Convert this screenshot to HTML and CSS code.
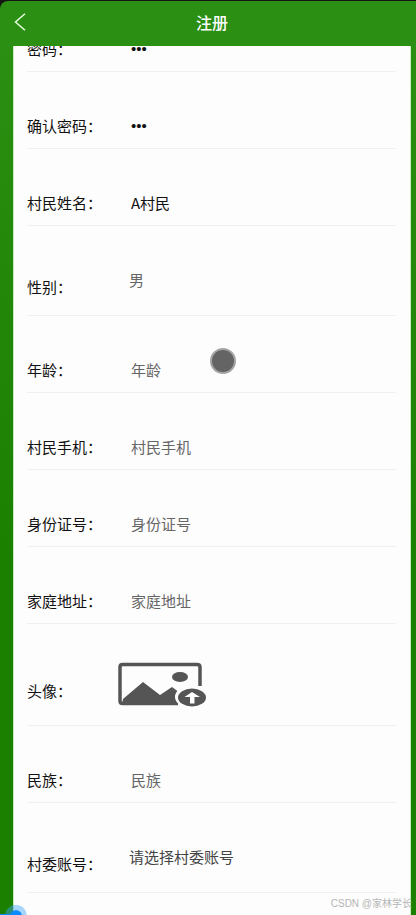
FILE: index.html
```html
<!DOCTYPE html>
<html lang="zh-CN">
<head>
    <meta charset="UTF-8">
    <meta name="viewport" content="width=device-width, initial-scale=1.0">
    <title>注册</title>
    <link rel="stylesheet" href="styles.css">
</head>
<body>
    <div class="app">
        <header class="header">
            <button class="back" type="button" aria-label="返回">
                <svg width="12" height="18" viewBox="0 0 12 18" fill="none" stroke="currentColor" stroke-width="1.5">
                    <path d="M11 .8L1.5 9l9.500 8.200"/>
                </svg>
            </button>
            <h1>注册</h1>
        </header>

        <main class="content">
            <form class="form">
                <div class="row">
                    <label for="password">密码：</label>
                    <input id="password" type="password" value="123">
                </div>
                <div class="row">
                    <label for="password2">确认密码：</label>
                    <input id="password2" type="password" value="123">
                </div>
                <div class="row">
                    <label for="name">村民姓名：</label>
                    <input id="name" type="text" value="A村民">
                </div>
                <div class="row row-select">
                    <label for="sex">性别：</label>
                    <select id="sex">
                        <option>男</option>
                        <option>女</option>
                    </select>
                </div>
                <div class="row">
                    <label for="age">年龄：</label>
                    <input id="age" type="text" placeholder="年龄">
                </div>
                <div class="row">
                    <label for="phone">村民手机：</label>
                    <input id="phone" type="tel" placeholder="村民手机">
                </div>
                <div class="row">
                    <label for="idcard">身份证号：</label>
                    <input id="idcard" type="text" placeholder="身份证号">
                </div>
                <div class="row">
                    <label for="address">家庭地址：</label>
                    <input id="address" type="text" placeholder="家庭地址">
                </div>
                <div class="row row-upload">
                    <label for="avatar">头像：</label>
                    <button class="upload" id="avatar" type="button">
                        <svg width="90" height="46" viewBox="0 0 90 46">
                            <path d="M82 24V5q0-2.500-3-2.500H4.500Q2 2.500 2 5v34q0 2.500 2.500 2.500H60" fill="none" stroke="#555" stroke-width="3.500"/>
                            <path d="M5 37L25 20l17 13 12-8 8 6v11H4z" fill="#555"/>
                            <ellipse cx="62" cy="15" rx="8" ry="5" fill="#555"/>
                            <ellipse cx="74" cy="35" rx="17" ry="11.500" fill="#fdfdfd"/>
                            <ellipse cx="74" cy="35.500" rx="14" ry="9" fill="#555"/>
                            <path d="M74 30l-7.500 5H72v6.500h4.500V35H82z" fill="#fff"/>
                        </svg>
                    </button>
                </div>
                <div class="row">
                    <label for="nation">民族：</label>
                    <input id="nation" type="text" placeholder="民族">
                </div>
                <div class="row row-select">
                    <label for="account">村委账号：</label>
                    <select id="account" class="dark">
                        <option>请选择村委账号</option>
                    </select>
                </div>
            </form>
        </main>

        <div class="touch"></div>
        <div class="progress"></div>
        <div class="watermark">CSDN @家林学长</div>
    </div>
</body>
</html>
```
FILE: styles.css
```css
* {
    box-sizing: border-box;
}
body {
    margin: 0;
    background: #151515;
    font-family: "Noto Sans CJK SC", sans-serif;
    font-size: 15px;
    color: #111;
}
.app {
    position: relative;
    height: 100vh;
    padding-top: 1px;
    display: flex;
    flex-direction: column;
    overflow: hidden;
}
.header {
    display: grid;
    grid-template-columns: 40px 1fr 32px;
    align-items: center;
    flex: none;
    height: 45px;
    padding-bottom: 3px;
    background: #2a8f12;
    border-top-left-radius: 8px;
    color: #fff;
}
.header h1 {
    margin: 0;
    font-size: 16px;
    font-weight: 500;
    text-align: center;
}
.back {
    display: flex;
    padding: 0 0 0 14px;
    border: none;
    background: none;
    color: #e8ffe0;
}
.content {
    flex: 1;
    min-height: 0;
    padding: 0 5px 0 13px;
    background: linear-gradient(#2a8f12, #1b7f00 60%);
    overflow: hidden;
}
/* form is scrolled down a little under the header */
.form {
    margin-top: -52px;
    padding: 0 14px 32px 13px;
    background: #fdfdfd;
    border: 1px solid #c4eab8;
}
.row {
    display: flex;
    align-items: center;
    height: 77px;
    padding: 35px 0 4px;
    border-bottom: 1px solid #f0f0f0;
}
.row-select {
    height: 90px;
}
.row-upload {
    height: 102px;
}
.row label {
    flex: none;
    width: 104px;
}
.row input,
.row select {
    flex: 1;
    min-width: 0;
    height: 40px;
    padding: 0;
    border: none;
    outline: none;
    background: none;
    font: inherit;
    color: #111;
}
.row input::placeholder {
    color: #666;
}
.row input[type="password"] {
    font-family: "Liberation Sans", sans-serif;
}
.row select {
    appearance: none;
    align-self: flex-start;
    height: 36px;
    margin-left: -2px;
    color: #666;
}
.row select.dark {
    color: #444;
}
.upload {
    display: flex;
    align-self: flex-start;
    margin-left: -13px;
    padding: 3px 0;
    border: none;
    background: none;
}
.touch {
    position: absolute;
    left: 210px;
    top: 348px;
    width: 26px;
    height: 26px;
    border: 2px solid #a5a5a5;
    border-radius: 50%;
    background: #646464;
}
.progress {
    position: absolute;
    left: 5px;
    bottom: -12px;
    width: 22px;
    height: 22px;
    border: 5px solid rgba(60, 165, 255, 0.45);
    border-radius: 50%;
    background: #0a8cff;
    background-clip: padding-box;
}
.progress::before {
    content: "";
    position: absolute;
    left: -10px;
    top: 4px;
    width: 16px;
    height: 2px;
    background: #0a8cff;
}
.watermark {
    position: absolute;
    right: 4px;
    bottom: 3px;
    font-family: "Liberation Sans", "Noto Sans CJK SC", sans-serif;
    font-size: 10px;
    line-height: 16px;
    color: #b5b5b5;
}
```
